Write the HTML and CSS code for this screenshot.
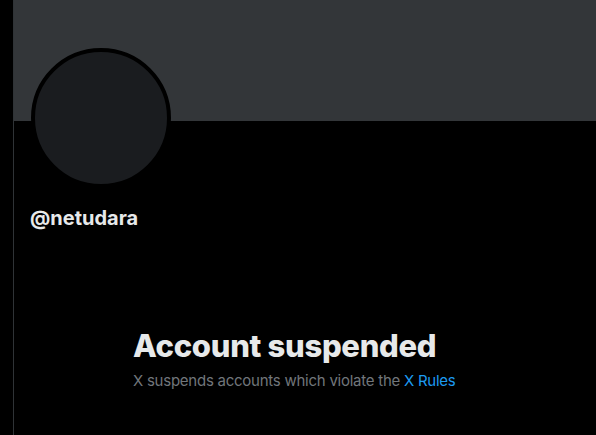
FILE: index.html
```html
<!DOCTYPE html>
<html>
<head>
<meta charset="utf-8">
<link rel="stylesheet" href="styles.css">
</head>
<body>
<div class="page">
  <div class="gutter"></div>
  <main class="column">
    <div class="banner"></div>
    <div class="avatar-row">
      <div class="avatar"></div>
    </div>
    <div class="handle">@netudara</div>
    <section class="notice">
      <h1 class="title">Account suspended</h1>
      <p class="sub">X suspends accounts which violate the <a class="link" href="#">X Rules</a></p>
    </section>
  </main>
</div>
</body>
</html>
```
FILE: styles.css
```css
html, body {
  margin: 0;
  padding: 0;
  background: #000;
  height: 100%;
}
body {
  font-family: Inter, "Liberation Sans", Arial, sans-serif;
  color: #e7e9ea;
  overflow: hidden;
}
.page {
  display: flex;
  height: 435px;
}
.gutter {
  width: 13px;
  flex: none;
  background: #000;
}
.column {
  flex: 1;
  border-left: 1px solid #2f3336;
  display: flex;
  flex-direction: column;
}
.banner {
  height: 121px;
  background: #333639;
}
.avatar-row {
  padding-left: 17px;
  height: 70px;
}
.avatar {
  width: 132px;
  height: 132px;
  border: 4px solid #000;
  border-radius: 50%;
  background: #1a1c1f;
  margin-top: -73px;
}
.handle {
  padding-left: 16px;
  margin-top: 15px;
  font-size: 20px;
  font-weight: 700;
  line-height: 24px;
  color: #e7e9ea;
}
.notice {
  padding-left: 119px;
  margin-top: 98px;
}
.title {
  margin: 0;
  font-size: 31px;
  font-weight: 800;
  line-height: 36px;
  letter-spacing: -0.3px;
  color: #e7e9ea;
}
.sub {
  margin: 7px 0 0;
  font-size: 15px;
  line-height: 20px;
  letter-spacing: -0.25px;
  color: #71767b;
}
.link {
  color: #1d9bf0;
  text-decoration: none;
}
```
